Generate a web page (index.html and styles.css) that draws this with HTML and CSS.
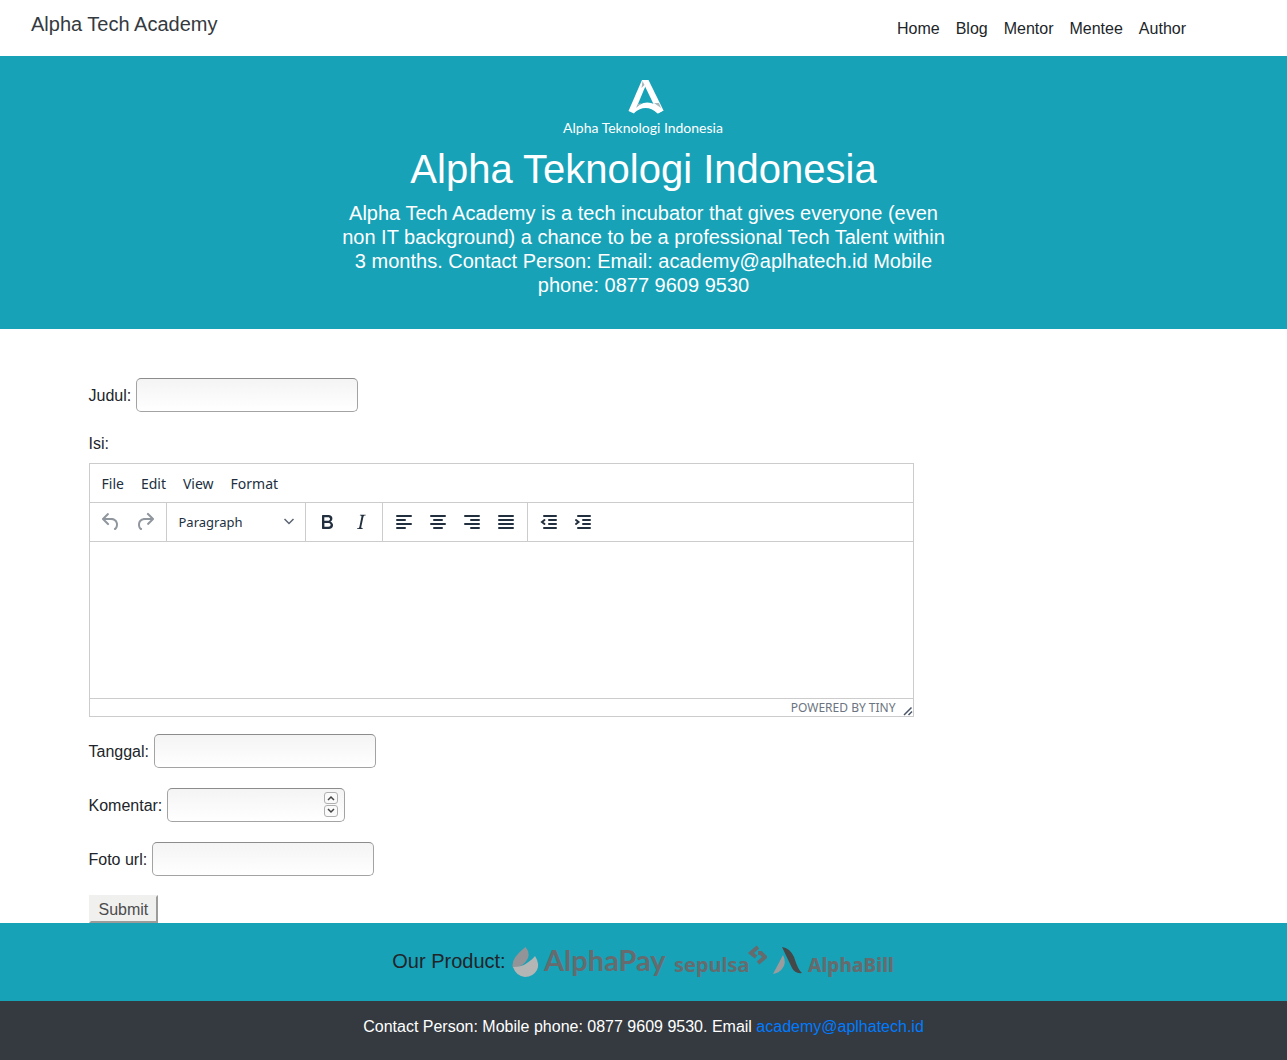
FILE: index.html
```html
<!DOCTYPE html>
<html lang="id">
<head>
<meta charset="utf-8">
<meta name="viewport" content="width=device-width, initial-scale=1">
<title>Alpha Tech Academy</title>
<link rel="stylesheet" href="styles.css">
</head>
<body>
<header class="navbar">
  <a class="brand" href="#">Alpha Tech Academy</a>
  <nav class="nav">
    <a href="#">Home</a>
    <a href="#">Blog</a>
    <a href="#">Mentor</a>
    <a href="#">Mentee</a>
    <a href="#">Author</a>
  </nav>
</header>

<section class="hero">
  <svg class="hero-logo" width="170" height="60" viewBox="0 0 170 60" role="img" aria-label="Alpha Teknologi Indonesia">
    <path d="M83 0h6L75 33.500 69.500 31z" fill="#fff"/>
    <path d="M83 0h6.500L104.500 30.500 99 33.500z" fill="#fff"/>
    <path d="M73 31Q87 15 103 29l1.500 1.500L98.500 33.500Q87 23 75 33z" fill="#fff"/>
    <path d="M77 28l6-5-4 1zM95 23l7 5-2-5zM83.500 1l2 4-3 3z" fill="#a9b8bc"/>
    <text x="84" y="53" text-anchor="middle" class="logo-name">Alpha Teknologi Indonesia</text>
  </svg>
  <h1>Alpha Teknologi Indonesia</h1>
  <p class="lead">Alpha Tech Academy is a tech incubator that gives everyone (even non IT background) a chance to be a professional Tech Talent within 3 months. Contact Person: Email: academy@aplhatech.id Mobile phone: 0877 9609 9530</p>
</section>

<main class="container">
  <form class="form">
    <div class="field">
      <label for="judul">Judul:</label>
      <input class="control" id="judul" type="text">
    </div>
    <div class="field-block">
      <label for="isi">Isi:</label>
      <div class="editor">
        <div class="menubar">
          <button type="button">File</button>
          <button type="button">Edit</button>
          <button type="button">View</button>
          <button type="button">Format</button>
        </div>
        <div class="toolbar">
          <div class="group">
            <button type="button" class="tool" disabled aria-label="Undo"><svg width="24" height="24"><path d="M6.400 8H12c3.700 0 6.200 2 6.800 5.100.6 2.700-.4 5.600-2.300 6.800a1 1 0 01-1-1.800c1.100-.6 1.800-2.700 1.400-4.600-.5-2.100-2.100-3.500-4.900-3.500H6.400l3.300 3.300a1 1 0 11-1.400 1.400l-5-5a1 1 0 010-1.400l5-5a1 1 0 011.400 1.400L6.400 8z"/></svg></button>
            <button type="button" class="tool" disabled aria-label="Redo"><svg width="24" height="24"><path d="M17.600 10H12c-2.800 0-4.400 1.400-4.900 3.500-.4 2 .3 4 1.400 4.600a1 1 0 11-1 1.800c-2-1.200-2.900-4.100-2.300-6.800.6-3 3-5.100 6.800-5.100h5.600l-3.300-3.300a1 1 0 111.400-1.400l5 5a1 1 0 010 1.400l-5 5a1 1 0 01-1.400-1.400l3.300-3.300z"/></svg></button>
          </div>
          <div class="group">
            <button type="button" class="block-format" aria-haspopup="listbox">Paragraph
              <svg width="12" height="12" viewBox="0 0 12 12"><path d="M1.500 3L6 7.500 10.500 3" fill="none" stroke="#5a6472" stroke-width="1.500"/></svg>
            </button>
          </div>
          <div class="group">
            <button type="button" class="tool" aria-label="Bold"><svg width="24" height="24"><path d="M7.800 19c-.3 0-.5 0-.6-.2l-.2-.5V5.700c0-.2 0-.4.2-.5l.6-.2h5c1.500 0 2.700.3 3.500 1 .7.6 1.100 1.400 1.100 2.500a3 3 0 01-.6 1.900c-.4.6-1 1-1.600 1.200.4.1.9.3 1.300.6s.8.7 1 1.200c.4.4.5 1 .5 1.600 0 1.300-.4 2.300-1.300 3-.8.7-2.100 1-3.800 1H7.800zm5-8.300c.6 0 1.200-.1 1.600-.5.4-.3.6-.7.6-1.300 0-1.100-.8-1.700-2.300-1.700H9.300v3.500h3.400zm.5 6c.7 0 1.300-.1 1.700-.4.4-.4.6-.9.6-1.500s-.2-1-.7-1.400c-.4-.3-1-.4-2-.4H9.400v3.800h4z" fill-rule="evenodd"/></svg></button>
            <button type="button" class="tool" aria-label="Italic"><svg width="24" height="24"><path d="M16.700 4.700l-.1.900h-.3c-.6 0-1 0-1.400.3-.3.3-.4.6-.5 1.100l-2.100 9.800v.6c0 .5.4.8 1.400.8h.2l-.2.8H8l.2-.8h.2c1.100 0 1.800-.5 2-1.500l2-9.800.1-.5c0-.6-.4-.8-1.400-.8h-.3l.2-.9h5.800z"/></svg></button>
          </div>
          <div class="group">
            <button type="button" class="tool" aria-label="Align left"><svg class="lines" width="24" height="24"><path d="M5 6h14M5 10h8M5 14h14M5 18h8"/></svg></button>
            <button type="button" class="tool" aria-label="Align center"><svg class="lines" width="24" height="24"><path d="M5 6h14M8 10h8M5 14h14M8 18h8"/></svg></button>
            <button type="button" class="tool" aria-label="Align right"><svg class="lines" width="24" height="24"><path d="M5 6h14M11 10h8M5 14h14M11 18h8"/></svg></button>
            <button type="button" class="tool" aria-label="Justify"><svg class="lines" width="24" height="24"><path d="M5 6h14M5 10h14M5 14h14M5 18h14"/></svg></button>
          </div>
          <div class="group">
            <button type="button" class="tool" aria-label="Decrease indent"><svg class="lines" width="24" height="24"><path d="M7 6h12M12 10h7M12 14h7M7 18h12M7.500 10L5 12l2.500 2"/></svg></button>
            <button type="button" class="tool" aria-label="Increase indent"><svg class="lines" width="24" height="24"><path d="M7 6h12M12 10h7M12 14h7M7 18h12M5 10l2.500 2L5 14"/></svg></button>
          </div>
        </div>
        <textarea class="editor-area" id="isi"></textarea>
        <div class="statusbar">
          <a href="#">Powered by Tiny</a>
          <svg width="10" height="10" viewBox="0 0 10 10"><path d="M1 9l7.500-7.500M5.500 9L9 5.500" stroke="#4a5568" stroke-width="1.500" fill="none"/></svg>
        </div>
      </div>
    </div>
    <div class="field">
      <label for="tanggal">Tanggal:</label>
      <input class="control" id="tanggal" type="text">
    </div>
    <div class="field">
      <label for="komentar">Komentar:</label>
      <div class="number">
        <input class="control control-number" id="komentar" type="number">
        <div class="stepper">
          <button type="button" aria-label="Increase"><svg width="8" height="6"><path d="M1 5l3-3 3 3"/></svg></button>
          <button type="button" aria-label="Decrease"><svg width="8" height="6"><path d="M1 1l3 3 3-3"/></svg></button>
        </div>
      </div>
    </div>
    <div class="field">
      <label for="foto">Foto url:</label>
      <input class="control" id="foto" type="text">
    </div>
    <button class="submit" type="submit">Submit</button>
  </form>
</main>

<section class="products">
  <span>Our Product:</span>
  <svg width="156" height="44" viewBox="0 -4 156 44" role="img" aria-label="AlphaPay">
    <path d="M13.500 3Q18 8 16 14 12 23 1 24-2 15 13.500 3z" fill="#929497"/>
    <path d="M23 12q5 8 2 14-4 7-12 7-9-1-12-10 9 0 14-4 6-4 8-7z" fill="#b4b5b5"/>
    <text x="32" y="27" class="pay-name">AlphaPay</text>
  </svg>
  <svg width="93" height="36" viewBox="0 0 93 36" role="img" aria-label="sepulsa">
    <text x="0" y="28" class="sepulsa-name">sepulsa</text>
    <path d="M84 3l-7 6 5 4M84 9h3l4 4-7 6" fill="none" stroke="#666b6d" stroke-width="4"/>
  </svg>
  <svg width="122" height="36" viewBox="0 0 122 36" role="img" aria-label="AlphaBill">
    <path d="M9 3q8 1 12 10 4 13 8 16-7 1-10-5z" fill="#444849"/>
    <path d="M10 11q4 8-1 14-3 4-9 5z" fill="#9b9c9d"/>
    <text x="35" y="28" class="bill-name">AlphaBill</text>
  </svg>
</section>

<footer class="footer">Contact Person: Mobile phone: 0877 9609 9530. Email <a href="mailto:academy@aplhatech.id">academy@aplhatech.id</a></footer>
</body>
</html>
```
FILE: styles.css
```css
*, *::before, *::after { box-sizing: border-box; }

html { height: 100%; }

body {
  display: flex;
  flex-direction: column;
  min-height: 100%;
  margin: 0;
  font: 16px/24px "Liberation Sans", Arial, sans-serif;
  color: #212529;
  background: #fff;
}

button, input, textarea { font: inherit; margin: 0; }
a { text-decoration: none; }
svg { display: block; }

.navbar {
  display: flex;
  justify-content: space-between;
  align-items: flex-start;
  height: 56px;
  padding: 8px 101px 8px 31px;
}
.brand { font-size: 20px; line-height: 32px; color: #343a40; }
.nav { display: flex; gap: 16px; padding-top: 9px; }
.nav a { color: #212529; }

.hero {
  display: flex;
  flex-direction: column;
  align-items: center;
  padding: 24px 16px 32px;
  background: #17a2b8;
  color: #fff;
  text-align: center;
}
.hero-logo { margin-bottom: 5px; }
.logo-name { font: 14px Lato, sans-serif; fill: #fff; }
.hero h1 { margin: 0 0 8px; font-size: 40px; font-weight: 400; line-height: 48px; }
.lead { max-width: 612px; margin: 0; font-size: 20px; line-height: 24px; }

.container { width: 100%; max-width: 1140px; margin: 0 auto; padding: 49px 15px 0; }
.form { display: flex; flex-direction: column; align-items: flex-start; gap: 20px; }
.field { display: flex; align-items: center; gap: 5px; }
.field label { padding-top: 2px; }
.field-block { display: flex; flex-direction: column; gap: 7px; width: 825px; max-width: 100%; margin-bottom: -3px; }

.control {
  width: 222px;
  height: 34px;
  padding: 4px 8px;
  border: 1px solid #a3a3a3;
  border-top-color: #8c8c8c;
  border-radius: 5px;
  background: linear-gradient(#f4f4f4, #fff);
  color: #212529;
}
.number { position: relative; }
.control-number { display: block; width: 178px; appearance: textfield; }
.stepper {
  position: absolute;
  top: 4px;
  right: 7px;
  display: flex;
  flex-direction: column;
  gap: 1px;
}
.stepper button {
  display: grid;
  place-items: center;
  width: 14px;
  height: 12px;
  padding: 0;
  border: 1px solid #b0b0b0;
  border-radius: 3px;
  background: #fafafa;
}
.stepper path { fill: none; stroke: #444; stroke-width: 1.5; }

.editor {
  display: flex;
  flex-direction: column;
  border: 1px solid #ccc;
  font: 13px/24px "Noto Sans", sans-serif;
  color: #222f3e;
}
.editor button { border: 0; background: none; color: inherit; }
.menubar { display: flex; gap: 1px; padding: 0 4px; }
.menubar button { height: 38px; padding: 2px 8px 0; font-size: 14px; }
.toolbar { display: flex; flex-wrap: wrap; border: 1px solid #ccc; border-width: 1px 0; }
.group { display: flex; align-items: center; height: 38px; padding: 0 4px; }
.group:not(:last-child) { border-right: 1px solid #ccc; }
.tool { display: grid; place-items: center; width: 34px; height: 34px; padding: 0; }
.tool svg { fill: #222f3e; }
.tool:disabled svg { opacity: .5; }
.tool .lines { fill: none; stroke: #222f3e; stroke-width: 2; stroke-linecap: round; }
.block-format {
  display: flex;
  align-items: center;
  justify-content: space-between;
  width: 130px;
  height: 34px;
  padding: 0 6px 0 8px;
}
.editor-area { height: 156px; padding: 8px; border: 0; resize: none; outline: 0; }
.statusbar {
  display: flex;
  justify-content: flex-end;
  align-items: center;
  gap: 7px;
  height: 18px;
  border-top: 1px solid #ccc;
  font-size: 12px;
  line-height: 17px;
}
.statusbar a { color: #6b7480; text-transform: uppercase; }
.statusbar svg { align-self: flex-end; }

.submit {
  height: 28px;
  margin-top: -1px;
  padding: 1px 8px 0;
  border: 2px solid;
  border-color: #f0f0ef #9c9c9a #9c9c9a #f0f0ef;
  background: #f0f0ef;
  color: #4c4c4c;
}

.products {
  display: flex;
  justify-content: center;
  align-items: center;
  gap: 6px;
  height: 78px;
  background: #17a2b8;
  font-size: 20px;
}
.products span { padding-bottom: 2px; }
.pay-name { font: bold 29px Lato, sans-serif; fill: #666b6d; }
.sepulsa-name { font: bold 20px "Noto Sans", sans-serif; fill: #666b6d; }
.bill-name { font: 800 19px "Noto Sans", sans-serif; fill: #666b6d; }

.footer {
  flex: 1;
  padding: 14px 16px 21px;
  background: #343a40;
  color: #fff;
  text-align: center;
}
.footer a { color: #007bff; }
```
